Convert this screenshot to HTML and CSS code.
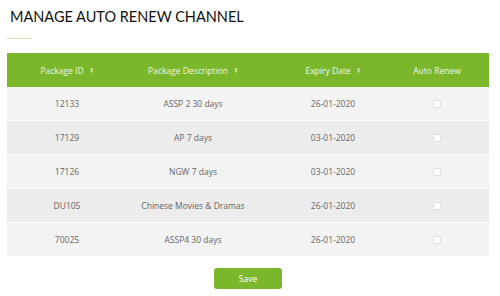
FILE: index.html
```html
<!DOCTYPE html>
<html lang="en">

<head>
    <meta charset="UTF-8">
    <meta name="viewport" content="width=device-width, initial-scale=1.0">
    <title>Manage Auto Renew Channel</title>
    <link rel="stylesheet" href="styles.css">
</head>

<body>
    <h1 class="page-title">MANAGE AUTO RENEW CHANNEL</h1>
    <div class="title-line"></div>

    <div class="renew-table">
        <div class="renew-row renew-head">
            <div class="cell col-id">Package ID <span class="sort">&#9650;<br>&#9660;</span></div>
            <div class="cell col-desc">Package Description <span class="sort">&#9650;<br>&#9660;</span></div>
            <div class="cell col-date">Expiry Date <span class="sort">&#9650;<br>&#9660;</span></div>
            <div class="cell col-renew">Auto Renew</div>
        </div>
        <div class="renew-row">
            <div class="cell col-id">12133</div>
            <div class="cell col-desc">ASSP 2 30 days</div>
            <div class="cell col-date">26-01-2020</div>
            <div class="cell col-renew"><span class="check"></span></div>
        </div>
        <div class="renew-row">
            <div class="cell col-id">17129</div>
            <div class="cell col-desc">AP 7 days</div>
            <div class="cell col-date">03-01-2020</div>
            <div class="cell col-renew"><span class="check"></span></div>
        </div>
        <div class="renew-row">
            <div class="cell col-id">17126</div>
            <div class="cell col-desc">NGW 7 days</div>
            <div class="cell col-date">03-01-2020</div>
            <div class="cell col-renew"><span class="check"></span></div>
        </div>
        <div class="renew-row">
            <div class="cell col-id">DU105</div>
            <div class="cell col-desc">Chinese Movies &amp; Dramas</div>
            <div class="cell col-date">26-01-2020</div>
            <div class="cell col-renew"><span class="check"></span></div>
        </div>
        <div class="renew-row">
            <div class="cell col-id">70025</div>
            <div class="cell col-desc">ASSP4 30 days</div>
            <div class="cell col-date">26-01-2020</div>
            <div class="cell col-renew"><span class="check"></span></div>
        </div>
    </div>

    <div class="actions">
        <button class="save-btn">Save</button>
    </div>
</body>

</html>
```

FILE: styles.css
```css
body {
    margin: 0;
    padding: 0 11px 0 7px;
    font-family: "Open Sans", "Liberation Sans", sans-serif;
    background: #fff;
}

.page-title {
    margin: 0;
    padding: 6px 0 0 3px;
    font-family: Lato, "Open Sans", sans-serif;
    font-size: 14.5px;
    font-weight: 400;
    color: #111;
    line-height: 22px;
}

.title-line {
    width: 25px;
    height: 1px;
    margin-top: 10px;
    background: #d4e8b8;
}

.renew-table {
    margin-top: 14px;
}

.renew-row {
    display: grid;
    grid-template-columns: 120px 132px 148px 1fr;
    height: 33px;
    background: #f3f3f3;
    border-bottom: 1px solid #fff;
    color: #666;
    font-size: 8.5px;
}

.renew-row:nth-child(odd) {
    background: #ececec;
}

.renew-row:last-child {
    border-bottom: none;
    background: #f3f3f3;
}

.renew-row.renew-head {
    height: 34px;
    background: #7bb72b;
    color: #eef6e4;
    border-bottom: none;
}

.cell {
    display: flex;
    align-items: center;
    justify-content: center;
}

.col-renew {
    padding-right: 22px;
}

.sort {
    display: inline-block;
    margin-left: 6px;
    font-size: 4px;
    line-height: 3.5px;
}

.check {
    width: 8px;
    height: 8px;
    background: #fff;
    border: 1px solid #e0e0e0;
    border-radius: 1px;
    box-sizing: border-box;
}

.actions {
    display: flex;
    justify-content: center;
    margin-top: 12px;
}

.save-btn {
    width: 68px;
    height: 21px;
    background: #7bb72b;
    border: none;
    border-radius: 3px;
    color: #fff;
    font-family: "Open Sans", "Liberation Sans", sans-serif;
    font-size: 8.5px;
}
```
